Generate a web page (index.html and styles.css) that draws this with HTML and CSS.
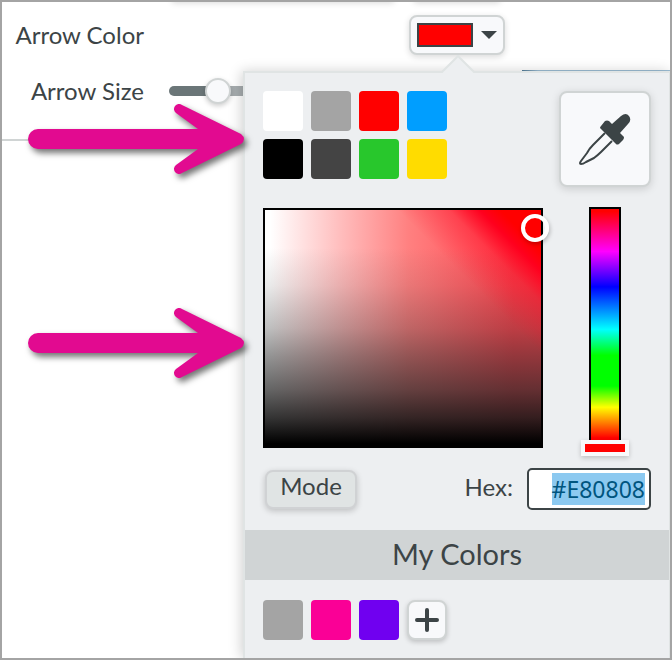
FILE: index.html
```html
<!DOCTYPE html>
<html lang="en">
<head>
<meta charset="utf-8">
<title>Arrow settings</title>
<link rel="stylesheet" href="styles.css">
</head>
<body>
<main class="frame">
  <section class="settings">
    <div class="row">
      <span class="label" id="color-label">Arrow Color</span>
      <div class="control control-color">
        <button class="color-button" type="button" aria-labelledby="color-label" aria-expanded="true">
          <span class="current"></span>
          <svg width="16" height="8" viewBox="0 0 16 8" aria-hidden="true"><path d="M0 0H16L8 8Z" fill="#3c4446"/></svg>
        </button>
      </div>
    </div>
    <div class="row row-size">
      <label class="label" for="size">Arrow Size</label>
      <div class="control"><input class="slider" id="size" type="range" min="0" max="100" value="20"></div>
    </div>
    <hr class="rule">
  </section>

  <div class="peek peek-left"></div>
  <div class="peek peek-right"></div>
  <div class="canvas-edge"></div>

  <section class="popover" aria-label="Color picker">
    <svg class="pointer" width="36" height="20" viewBox="0 0 36 20" aria-hidden="true"><path d="M0 20V17H2L18 1L34 17H36V20Z" fill="#edeff1"/><path d="M0 17H2L18 1L34 17H36" fill="none" stroke="#e0e4e4" stroke-width="2"/></svg>
    <div class="top">
      <div class="swatches presets">
        <button class="swatch white" type="button" aria-label="White"></button>
        <button class="swatch gray" type="button" aria-label="Gray"></button>
        <button class="swatch red" type="button" aria-label="Red"></button>
        <button class="swatch blue" type="button" aria-label="Blue"></button>
        <button class="swatch black" type="button" aria-label="Black"></button>
        <button class="swatch dark" type="button" aria-label="Dark gray"></button>
        <button class="swatch green" type="button" aria-label="Green"></button>
        <button class="swatch yellow" type="button" aria-label="Yellow"></button>
      </div>
      <button class="dropper" type="button" aria-label="Pick a color from the screen">
        <svg width="52" height="52" viewBox="0 0 52 52" aria-hidden="true">
          <path d="M26 20L14 32Q10 36 8 40L2 48Q0 51 2 51Q4 51 7 49L15 45Q19 42 22 39L33 28" fill="none" stroke="#3c4446" stroke-width="2" stroke-linejoin="round"/>
          <path d="M22 13L26 8Q28 7 30 8L33 11L42 3Q47 -1 50 3Q53 7 49 11L41 20L45 24Q45 26 44 27L40 31Q38 32 37 31L21 15Q21 14 22 13Z" fill="#3c4446"/>
        </svg>
      </button>
    </div>
    <div class="picker">
      <div class="field"><span class="ring"></span></div>
      <div class="hue"><span class="hue-thumb"></span></div>
    </div>
    <div class="values">
      <button class="mode" type="button">Mode</button>
      <div class="hex">
        <label for="hex">Hex:</label>
        <input id="hex" type="text" value="#E80808" spellcheck="false" autofocus>
      </div>
    </div>
    <h2 class="heading">My Colors</h2>
    <div class="swatches mine">
      <button class="swatch gray" type="button" aria-label="Gray"></button>
      <button class="swatch pink" type="button" aria-label="Pink"></button>
      <button class="swatch purple" type="button" aria-label="Purple"></button>
      <button class="add" type="button" aria-label="Add color">
        <svg width="24" height="24" viewBox="0 0 24 24" aria-hidden="true"><path d="M12 2V22M2 12H22" stroke="#3c4446" stroke-width="4" stroke-linecap="round"/></svg>
      </button>
    </div>
  </section>

  <svg class="arrow arrow-first" width="218" height="72" viewBox="0 0 218 72" aria-hidden="true"><path d="M10 25H170L148 9A5 5 0 0 1 154 1L213 30Q219 35 213 40L154 69A5 5 0 0 1 148 61L170 45H10A10 10 0 0 1 10 25Z" fill="#e20a90"/></svg>
  <svg class="arrow arrow-second" width="218" height="72" viewBox="0 0 218 72" aria-hidden="true"><path d="M10 25H170L148 9A5 5 0 0 1 154 1L213 30Q219 35 213 40L154 69A5 5 0 0 1 148 61L170 45H10A10 10 0 0 1 10 25Z" fill="#e20a90"/></svg>
</main>
<script src="script.js"></script>
</body>
</html>
```
FILE: script.js
```js
document.getElementById("hex").select();
```
FILE: styles.css
```css
* { box-sizing: border-box; }
body {
  margin: 0;
  font-family: Lato, "Open Sans", sans-serif;
  font-size: 24px;
  line-height: 32px;
  color: #3c4446;
}
button, input { font: inherit; color: inherit; margin: 0; padding: 0; }
.frame {
  position: relative;
  height: 100vh;
  overflow: hidden;
  border: 2px solid #a4a4a4;
  background: #fff;
}
.settings { padding-top: 12px; }
.row { display: flex; align-items: center; height: 42px; }
.row-size { margin-top: 16px; height: 38px; }
.label { width: 142px; text-align: right; }
.control { flex: 1; padding-left: 25px; display: flex; }
.control-color { padding-left: 265px; }
.color-button {
  display: flex;
  align-items: center;
  gap: 8px;
  width: 96px;
  height: 40px;
  padding: 0 6px;
  border: 2px solid #d0d4d4;
  border-radius: 8px;
  background: #f8f9fb;
  box-shadow: 0 2px 6px rgba(0, 0, 0, 0.15);
}
.current { width: 56px; height: 24px; border: 2px solid #3c4446; background: #f00; }
.slider {
  appearance: none;
  width: 204px;
  height: 26px;
  background: none;
}
.slider::-webkit-slider-runnable-track {
  height: 10px;
  border-radius: 5px;
  background: linear-gradient(90deg, #6b7678 48px, #a7adaf 48px);
}
.slider::-webkit-slider-thumb {
  appearance: none;
  width: 26px;
  height: 26px;
  margin-top: -8px;
  border: 2px solid #d0d4d4;
  border-radius: 50%;
  background: #f8f9fb;
  box-shadow: 0 2px 5px rgba(0, 0, 0, 0.2);
}
.rule { height: 2px; margin: 29px 0 0; border: 0; background: #d0d4d4; }
.peek { position: absolute; top: -10px; height: 10px; box-shadow: 0 1px 6px rgba(0, 0, 0, 0.15); }
.peek-left { left: 170px; width: 222px; }
.peek-right { left: 412px; width: 86px; }
.canvas-edge { position: absolute; top: 68px; left: 520px; right: 0; height: 1px; background: linear-gradient(90deg, #547c98, #9cbdd4 16px); }
.popover {
  position: absolute;
  top: 69px;
  left: 241px;
  right: 0;
  bottom: 0;
  border: 2px solid #e0e4e4;
  border-right-width: 1px;
  border-bottom: 0;
  background: #edeff1;
  box-shadow: -2px 0 12px rgba(0, 0, 0, 0.18);
}
.pointer { position: absolute; top: -18px; left: 195px; }
.top { display: flex; justify-content: space-between; align-items: flex-start; padding: 18px 18px 0; }
.swatches { display: flex; gap: 8px; }
.presets { display: grid; grid-template-columns: repeat(4, 40px); }
.swatch { width: 40px; height: 40px; border: 0; border-radius: 4px; }
.white { background: #fff; }
.gray { background: #a4a4a4; }
.red { background: #f00; }
.blue { background: #009eff; }
.black { background: #000; }
.dark { background: #444; }
.green { background: #28c72c; }
.yellow { background: #ffdc00; }
.pink { background: #fa0096; }
.purple { background: #7000f0; }
.dropper {
  display: grid;
  place-items: center;
  width: 92px;
  height: 96px;
  border: 2px solid #d0d4d4;
  border-radius: 8px;
  background: #f8f9fb;
  box-shadow: 0 2px 8px rgba(0, 0, 0, 0.15);
}
.picker { display: flex; justify-content: space-between; padding: 20px 48px 0 18px; }
.field {
  position: relative;
  width: 280px;
  height: 240px;
  margin-top: 1px;
  border: 2px solid #000;
  background:
    linear-gradient(45deg, rgba(255, 0, 30, 0) 72%, rgba(255, 0, 30, 0.35) 82%, #ff001e 88%, #f00 92%),
    linear-gradient(180deg, rgba(40, 40, 40, 0) 16%, rgba(40, 40, 40, 0.1) 32%, rgba(40, 40, 40, 0.3) 50%, rgba(40, 40, 40, 0.5) 62%, rgba(38, 38, 38, 0.71) 76%, rgba(24, 24, 24, 0.88) 88%, #000 99%),
    linear-gradient(90deg, #fff 2%, #ffbebe 27%, #ff8080 52%, #ff4650 90%);
}
.ring {
  position: absolute;
  top: 4px;
  right: -8px;
  width: 28px;
  height: 28px;
  border: 4px solid #fff;
  border-radius: 50%;
  box-shadow: 1px 2px 4px rgba(0, 0, 0, 0.25);
}
.hue {
  position: relative;
  width: 32px;
  height: 240px;
  border: 2px solid #000;
  background: linear-gradient(180deg, #f00 1%, #f0f 18%, #00f 33%, #0ff 51%, #0f0 62%, #0f0 75%, #ff0 84%, #f00 97%);
}
.hue-thumb {
  position: absolute;
  bottom: -11px;
  left: -10px;
  width: 48px;
  height: 16px;
  border: 4px solid #f8f9fb;
  background: #f00;
  box-shadow: 0 2px 5px rgba(0, 0, 0, 0.2);
}
.values { display: flex; justify-content: space-between; align-items: center; height: 82px; padding: 0 18px 0 20px; }
.mode {
  width: 92px;
  height: 39px;
  padding-bottom: 6px;
  border: 2px solid #d0d2d4;
  border-radius: 8px;
  background: #e0e4e4;
  line-height: 28px;
  box-shadow: 0 2px 6px rgba(0, 0, 0, 0.2);
}
.hex { display: flex; align-items: center; gap: 14px; }
.hex label { padding-bottom: 4px; }
.hex input {
  width: 124px;
  height: 42px;
  padding: 0 4px;
  border: 2px solid #3c4446;
  border-radius: 5px;
  outline: 0;
  background: #fff;
  font-family: "Noto Sans", sans-serif;
  font-size: 23px;
  text-align: right;
}
.hex input::selection { background: #8cc9f0; color: #00557f; }
.heading { margin: 0; height: 50px; background: #d0d4d5; font-size: 29px; font-weight: 400; line-height: 48px; text-align: center; }
.mine { padding: 20px 18px; }
.add {
  display: grid;
  place-items: center;
  width: 40px;
  height: 40px;
  border: 2px solid #d0d4d4;
  border-radius: 8px;
  background: #f8f9fb;
  box-shadow: 0 2px 5px rgba(0, 0, 0, 0.2);
}
.arrow { position: absolute; left: 26px; overflow: visible; filter: drop-shadow(3px 4px 3px rgba(0, 0, 0, 0.55)); }
.arrow-first { top: 102px; }
.arrow-second { top: 306px; }
```
